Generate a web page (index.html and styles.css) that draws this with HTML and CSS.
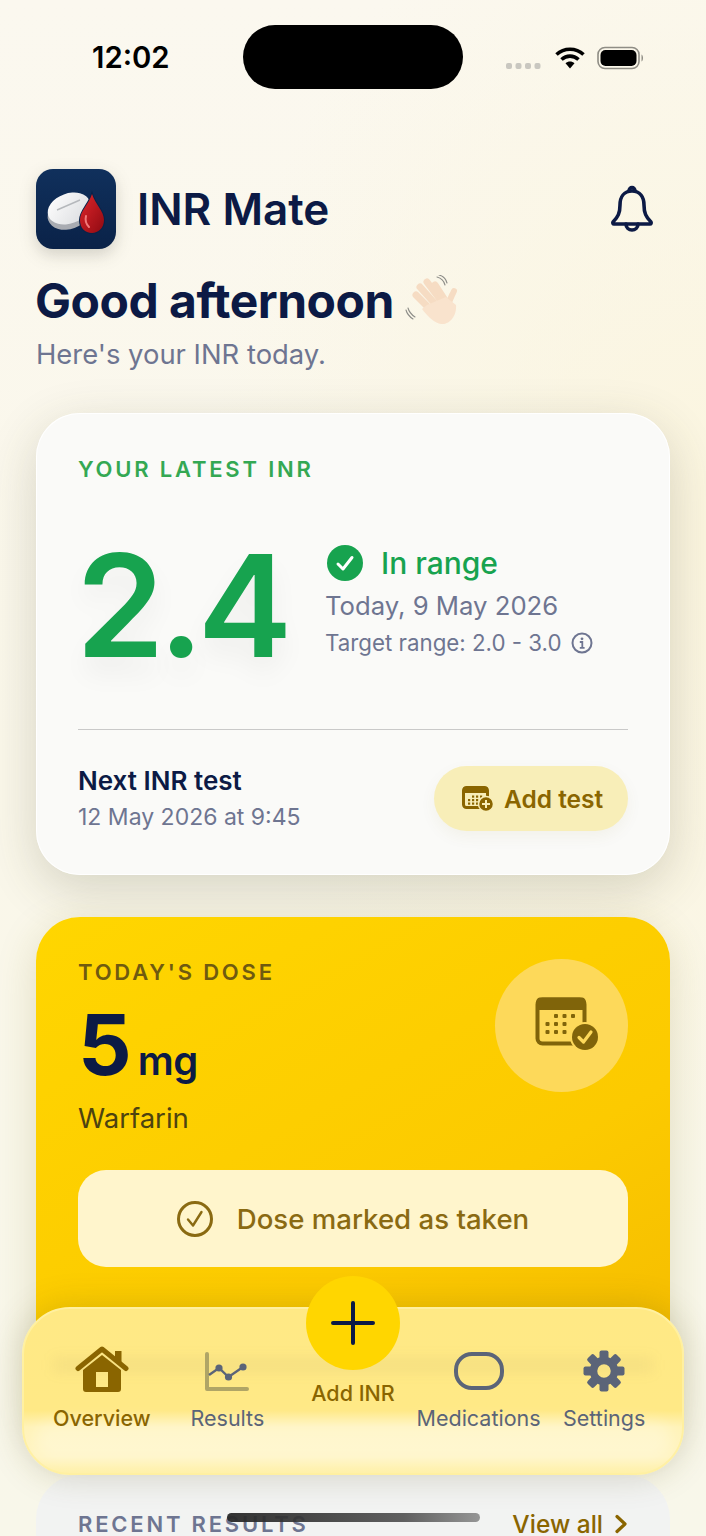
FILE: index.html
```html
<!DOCTYPE html>
<html lang="en">
<head>
<meta charset="utf-8">
<title>INR Mate</title>
<link rel="stylesheet" href="styles.css">
</head>
<body>
<div class="page">
  <div class="status">
    <div class="time">12:02</div>
    <div class="island"></div>
    <div class="status-icons">
      <svg class="signal" width="35" height="8" viewBox="0 0 35 8"><g fill="#c9c7c0"><rect x="0" y="1" width="6" height="6" rx="2"/><rect x="9.500" y="1" width="6" height="6" rx="2"/><rect x="19" y="1" width="6" height="6" rx="2"/><rect x="28.500" y="1" width="6" height="6" rx="2"/></g></svg>
      <svg class="wifi" width="30" height="24" viewBox="0 0 30 24"><g fill="none" stroke="#000" stroke-width="3.600"><path d="M1.500 8.500C9 1.500 21 1.500 28.500 8.500"/><path d="M6.500 13.500C11.500 9 18.500 9 23.500 13.500"/></g><path d="M10.500 17.200C13 15 17 15 19.500 17.200L15 22.500Z" fill="#000"/></svg>
      <svg class="battery" width="48" height="24" viewBox="0 0 48 24"><rect x="1" y="1.500" width="41" height="21" rx="7" fill="none" stroke="#8f8d85" stroke-width="1.600"/><rect x="3.500" y="4" width="36" height="16" rx="5" fill="#000"/><path d="M44.500 8.500C46.500 9.500 46.500 14.500 44.500 15.500Z" fill="#8f8d85"/></svg>
    </div>
  </div>

  <header class="brand">
    <div class="brand-left">
      <svg class="logo" width="80" height="80" viewBox="0 0 80 80">
        <defs>
          <linearGradient id="logoBg" x1="0" y1="0" x2="0" y2="1"><stop offset="0" stop-color="#10305c"/><stop offset="1" stop-color="#0a2248"/></linearGradient>
          <linearGradient id="pillTop" x1="0" y1="0" x2="1" y2="1"><stop offset="0" stop-color="#ffffff"/><stop offset="1" stop-color="#d9dbde"/></linearGradient>
          <linearGradient id="dropFill" x1="0" y1="0" x2="1" y2="1"><stop offset="0" stop-color="#e0262b"/><stop offset="1" stop-color="#8f0a12"/></linearGradient>
        </defs>
        <rect width="80" height="80" rx="17" fill="url(#logoBg)"/>
        <ellipse cx="33" cy="44" rx="22" ry="16" transform="rotate(-20 33 44)" fill="#a9acb2"/>
        <ellipse cx="33" cy="39.500" rx="22" ry="15" transform="rotate(-20 33 39.500)" fill="url(#pillTop)"/>
        <path d="M21 41L44 31" stroke="#b5b8bc" stroke-width="1.400"/>
        <path d="M56 25C59 35 68 42 68 51C68 59 62 64 56 64C49 64 44 59 44 51C44 42 53 35 56 25Z" fill="#0a2248" stroke="#0a2248" stroke-width="2"/>
        <path d="M56 25C59 35 68 42 68 51C68 59 62 64 56 64C49 64 44 59 44 51C44 42 53 35 56 25Z" fill="url(#dropFill)"/>
        <path d="M50 47C49 51 50 55 53 58" stroke="#f27a7a" stroke-width="2" fill="none" stroke-linecap="round"/>
      </svg>
      <div class="app-name">INR Mate</div>
    </div>
    <svg class="bell" width="44" height="48" viewBox="0 0 44 48"><g fill="none" stroke="#0c1a45" stroke-width="3.600" stroke-linejoin="round" stroke-linecap="round"><path d="M22 6C14 6 10 12 10 20C10 28 8 32 3 37C2.500 38 3 39 4 39H40C41 39 41.500 38 41 37C36 32 34 28 34 20C34 12 30 6 22 6Z"/><path d="M19 6C19 1.500 25 1.500 25 6"/><path d="M16 39C16 47 28 47 28 39"/></g></svg>
  </header>

  <div class="greeting">
    <h1 class="greeting-title">Good afternoon
      <svg class="wave" width="56" height="52" viewBox="4 4 56 52">
        <g fill="none" stroke="#f6dcc3" stroke-width="7" stroke-linecap="round">
          <path d="M17 24L33 40"/><path d="M21 16L38 35"/><path d="M28 11L43 31"/><path d="M36 14L47 31"/>
          <path d="M55 20C53 25 50 28 49 36" stroke-width="6"/>
        </g>
        <path d="M28 34L47 26L57 34C58 44 51 54 42 53C36 52 30 47 23 38Z" fill="#f9e3cd"/>
        <g fill="none" stroke="#8d8d88" stroke-width="1.100" stroke-linecap="round"><path d="M38 6C42 7 45 10 46 14"/><path d="M40 4C44 5 47 8 48 12"/><path d="M9 37C10 41 13 44 16 46"/><path d="M7 39C8 43 11 46 14 48"/></g>
      </svg>
    </h1>
    <p class="greeting-sub">Here's your INR today.</p>
  </div>

  <section class="card card-inr">
    <div class="label label-green">YOUR LATEST INR</div>
    <div class="hero">
      <div class="hero-value">2.4</div>
      <div class="hero-info">
        <div class="range-row">
          <svg width="36" height="36" viewBox="0 0 36 36"><circle cx="18" cy="18" r="18" fill="#17a34f"/><path d="M11 19L16 24L25 12.500" fill="none" stroke="#fff" stroke-width="3" stroke-linecap="round" stroke-linejoin="round"/></svg>
          <span class="range-text">In range</span>
        </div>
        <div class="hero-date">Today, 9 May 2026</div>
        <div class="hero-target">Target range: 2.0 - 3.0
          <svg class="info" width="22" height="22" viewBox="0 0 22 22"><circle cx="11" cy="11" r="9.500" fill="none" stroke="#6e7591" stroke-width="2"/><circle cx="11" cy="6.800" r="1.400" fill="#6e7591"/><path d="M8.800 10H11.300V15.500M8.800 15.800H13.600" fill="none" stroke="#6e7591" stroke-width="1.800"/></svg>
        </div>
      </div>
    </div>
    <div class="divider"></div>
    <div class="next-row">
      <div>
        <div class="next-title">Next INR test</div>
        <div class="next-date">12 May 2026 at 9:45</div>
      </div>
      <div class="add-test">
        <svg width="32" height="26" viewBox="0 0 32 26">
          <rect x="1.500" y="1.500" width="24" height="20" rx="3" fill="none" stroke="#8a6500" stroke-width="3"/>
          <rect x="1" y="1" width="25" height="6" rx="2" fill="#8a6500"/>
          <g fill="#8a6500"><rect x="10" y="9.500" width="2.200" height="2.200"/><rect x="14" y="9.500" width="2.200" height="2.200"/><rect x="18" y="9.500" width="2.200" height="2.200"/><rect x="6" y="13" width="2.200" height="2.200"/><rect x="10" y="13" width="2.200" height="2.200"/><rect x="14" y="13" width="2.200" height="2.200"/><rect x="6" y="16.500" width="2.200" height="2.200"/><rect x="10" y="16.500" width="2.200" height="2.200"/><rect x="14" y="16.500" width="2.200" height="2.200"/></g>
          <circle cx="24" cy="18" r="7.500" fill="#8a6500" stroke="#f8eeb8" stroke-width="1.500"/>
          <path d="M24 14V22M20 18H28" stroke="#f8eeb8" stroke-width="2"/>
        </svg>
        <span>Add test</span>
      </div>
    </div>
  </section>

  <section class="card card-dose">
    <div class="dose-top">
      <div>
        <div class="label label-dose">TODAY'S DOSE</div>
        <div class="dose-amount"><span class="dose-num">5</span><span class="dose-unit">mg</span></div>
        <div class="dose-name">Warfarin</div>
      </div>
      <div class="dose-circle">
        <svg class="dose-cal" width="66" height="56" viewBox="0 0 66 56">
          <rect x="3.500" y="3.500" width="47" height="44" rx="5" fill="none" stroke="#80640a" stroke-width="4"/>
          <path d="M2 7C2 3.500 3.500 1.500 7 1.500H47C50.500 1.500 52 3.500 52 7V14H2Z" fill="#80640a"/>
          <g fill="#80640a"><rect x="20" y="18" width="4" height="4" rx="1"/><rect x="28.500" y="18" width="4" height="4" rx="1"/><rect x="37" y="18" width="4" height="4" rx="1"/><rect x="11.500" y="26" width="4" height="4" rx="1"/><rect x="20" y="26" width="4" height="4" rx="1"/><rect x="28.500" y="26" width="4" height="4" rx="1"/><rect x="11.500" y="34" width="4" height="4" rx="1"/><rect x="20" y="34" width="4" height="4" rx="1"/><rect x="28.500" y="34" width="4" height="4" rx="1"/></g>
          <circle cx="51" cy="41" r="15" fill="#fdd95a"/>
          <circle cx="51" cy="41" r="13" fill="#80640a"/>
          <path d="M45 41.500L49.500 46L57 36" fill="none" stroke="#fdd95a" stroke-width="3.200" stroke-linecap="round" stroke-linejoin="round"/>
        </svg>
      </div>
    </div>
    <div class="dose-btn">
      <svg width="36" height="36" viewBox="0 0 36 36"><circle cx="18" cy="18" r="16.500" fill="none" stroke="#8a6a12" stroke-width="3"/><path d="M11 18.500L16 24.500L24.500 11" fill="none" stroke="#8a6a12" stroke-width="2.400" stroke-linecap="round" stroke-linejoin="round"/></svg>
      <span>Dose marked as taken</span>
    </div>
  </section>

  <section class="card card-recent">
    <div class="recent-row">
      <div class="label label-recent">RECENT RESULTS</div>
      <div class="view-all">View all
        <svg width="14" height="20" viewBox="0 0 14 20"><path d="M3 2.500L11 10L3 17.500" fill="none" stroke="#8a6500" stroke-width="3.200" stroke-linecap="round" stroke-linejoin="round"/></svg>
      </div>
    </div>
  </section>
</div>

<nav class="tabbar">
  <div class="tabbar-smear"></div>
  <div class="tabbar-glow"></div>
  <div class="tab tab-active">
    <svg class="tab-icon" width="54" height="50" viewBox="0 0 54 50"><path d="M8 24L27 9L46 24V43C46 45 45 46 43 46H11C9 46 8 45 8 43Z M21 26V41H33V26Z" fill="#8a6500" fill-rule="evenodd"/><path d="M40 5H46.500V17L40 12Z" fill="#8a6500"/><path d="M3 22.500L27 3L51 22.500" fill="none" stroke="#8a6500" stroke-width="5" stroke-linecap="round" stroke-linejoin="round"/></svg>
    <span>Overview</span>
  </div>
  <div class="tab">
    <svg class="tab-icon" width="54" height="50" viewBox="0 0 54 50"><path d="M7 8V43H47" fill="none" stroke="#b0a566" stroke-width="4" stroke-linecap="round" stroke-linejoin="round"/><path d="M9 29L19 22L28.500 31L43 21" fill="none" stroke="#5b6478" stroke-width="2.400"/><g fill="#5b6478"><circle cx="19" cy="22" r="3.600"/><circle cx="28.500" cy="31" r="3.600"/><circle cx="43" cy="21" r="3.600"/></g></svg>
    <span>Results</span>
  </div>
  <div class="tab tab-add">
    <div class="fab"><svg width="44" height="44" viewBox="0 0 44 44"><path d="M22 2V42M2 22H42" stroke="#0c1a45" stroke-width="4" stroke-linecap="round"/></svg></div>
    <span>Add INR</span>
  </div>
  <div class="tab">
    <svg class="tab-icon" width="54" height="50" viewBox="0 0 54 50"><rect x="4" y="8" width="46" height="34" rx="16" fill="none" stroke="#5b6478" stroke-width="4"/></svg>
    <span>Medications</span>
  </div>
  <div class="tab">
    <svg class="tab-icon" width="54" height="50" viewBox="0 0 54 50">
      <g transform="translate(27 25)" fill="#5b6478">
        <circle r="10.500" fill="none" stroke="#5b6478" stroke-width="7.500"/>
        <rect x="-4.500" y="-20.500" width="9" height="9" rx="2"/>
        <rect x="-4.500" y="-20.500" width="9" height="9" rx="2" transform="rotate(45)"/>
        <rect x="-4.500" y="-20.500" width="9" height="9" rx="2" transform="rotate(90)"/>
        <rect x="-4.500" y="-20.500" width="9" height="9" rx="2" transform="rotate(135)"/>
        <rect x="-4.500" y="-20.500" width="9" height="9" rx="2" transform="rotate(180)"/>
        <rect x="-4.500" y="-20.500" width="9" height="9" rx="2" transform="rotate(225)"/>
        <rect x="-4.500" y="-20.500" width="9" height="9" rx="2" transform="rotate(270)"/>
        <rect x="-4.500" y="-20.500" width="9" height="9" rx="2" transform="rotate(315)"/>
      </g>
    </svg>
    <span>Settings</span>
  </div>
</nav>
<div class="home-indicator"></div>
</body>
</html>
```

FILE: styles.css
```css
* { box-sizing: border-box; }
html, body { margin: 0; height: 100%; overflow: hidden; }
body {
  position: relative;
  font-family: Inter, "Liberation Sans", sans-serif;
  color: #0c1a45;
  background:
    radial-gradient(500px 700px at 100% 35%, #fbf5df 0%, rgba(251,245,223,0) 100%),
    linear-gradient(180deg, #fbf8ef 0%, #faf7ea 50%, #f8f7ea 100%);
}
.page { padding: 25px 36px 0; }

.status { display: grid; grid-template-columns: 1fr 220px 1fr; margin: 0 -36px; height: 64px; }
.time { font-size: 29.3px; font-weight: 600; line-height: 66px; padding-left: 92px; color: #000; }
.island { background: #000; border-radius: 32px; height: 64px; }
.status-icons { display: flex; align-items: center; padding-left: 43px; }
.signal { margin-top: 16px; margin-right: 14px; }
.wifi { margin-top: 0; margin-right: 12px; }
.battery { margin-top: -1px; }

.brand { display: flex; justify-content: space-between; align-items: center; margin-top: 80px; height: 80px; }
.brand-left { display: flex; align-items: center; gap: 21px; }
.logo { display: block; filter: drop-shadow(0 6px 8px rgba(40,40,30,.18)); }
.app-name { font-size: 44px; font-weight: 600; }
.bell { margin-right: 16px; }

.greeting { margin-top: 24px; }
.greeting-title { margin: 0; display: flex; align-items: center; gap: 8px; margin-left: -1px; font-size: 48px; line-height: 56px; font-weight: 700; letter-spacing: -0.5px; }
.wave { margin-left: 1px; }
.greeting-sub { margin: 8px 0 0; font-size: 27.4px; line-height: 34px; color: #6e7591; }

.card { border-radius: 44px; padding: 43px 42px 44px; margin-top: 42px; }
.label { font-size: 22px; line-height: 26px; font-weight: 600; letter-spacing: 2.8px; }
.card-inr { background: #fafaf8; box-shadow: inset 0 0 0 1px rgba(255,255,255,.9), 0 14px 50px rgba(70,70,40,.2); }
.label-green { color: #34a853; }

.hero { display: flex; align-items: center; height: 170px; margin-top: 38px; }
.hero-value { width: 249px; margin-left: -2px; font-size: 142px; line-height: 170px; font-weight: 600; color: #17a34f; letter-spacing: -6px; text-shadow: 0 16px 28px rgba(0,0,0,.05); }
.hero-info { display: flex; flex-direction: column; margin-bottom: 7px; }
.range-row { display: flex; align-items: center; gap: 18px; margin-left: 2px; }
.range-text { font-size: 30px; line-height: 36px; font-weight: 500; color: #17a34f; }
.hero-date { font-size: 25.7px; line-height: 34px; color: #6e7591; margin-top: 8px; }
.hero-target { display: flex; align-items: center; gap: 9px; font-size: 22.3px; line-height: 30px; color: #6e7591; margin-top: 5px; }

.divider { height: 1px; background: #c9c9c9; margin-top: 39px; }
.next-row { display: flex; justify-content: space-between; align-items: center; margin-top: 36px; height: 65px; }
.next-title { font-size: 26px; line-height: 32px; font-weight: 600; }
.next-date { font-size: 23px; line-height: 30px; color: #6e7591; margin-top: 5px; }
.add-test { display: flex; align-items: center; gap: 10px; height: 65px; width: 194px; padding-left: 28px; border-radius: 33px; background: #f8eeb8; color: #8a6500; font-size: 24.5px; font-weight: 600; box-shadow: 0 6px 16px rgba(120,100,20,.06); }

.card-dose { padding-top: 42px; padding-bottom: 166px; background: linear-gradient(150deg, #ffd600 0%, #fcca00 60%, #f3b900 100%); box-shadow: 0 10px 40px rgba(130,120,30,.2); }
.dose-top { display: flex; justify-content: space-between; align-items: flex-start; }
.label-dose { color: #6f5a10; }
.dose-amount { display: flex; align-items: baseline; gap: 8px; margin-top: 18px; height: 84px; }
.dose-num { font-size: 84px; line-height: 84px; font-weight: 700; letter-spacing: -2px; }
.dose-unit { font-size: 40px; font-weight: 600; letter-spacing: -0.5px; }
.dose-name { font-size: 27.5px; line-height: 34px; color: #4d4310; margin-top: 14px; }
.dose-circle { width: 133px; height: 133px; border-radius: 50%; background: #fdd95a; display: flex; align-items: center; justify-content: center; }
.dose-cal { margin-left: 11px; margin-top: -3px; }
.dose-btn { display: flex; align-items: center; justify-content: center; gap: 24px; height: 97px; margin-top: 35px; border-radius: 28px; background: #fff5cc; color: #8a6a12; font-size: 27.6px; font-weight: 500; }

.card-recent { padding-top: 36px; background: #f2f3f2; }
.recent-row { display: flex; justify-content: space-between; align-items: center; }
.label-recent { color: #6e7591; }
.view-all { display: flex; align-items: center; gap: 11px; font-size: 24.5px; font-weight: 500; line-height: 26px; color: #8a6500; }

.tabbar {
  position: absolute; left: 22px; right: 22px; bottom: 61px; height: 168px;
  display: grid; grid-template-columns: repeat(5, 1fr); align-items: start;
  padding: 37px 15px 0;
  border-radius: 48px;
  background: linear-gradient(180deg, #ffe985 0%, #ffe986 62%, #fff3b8 72%, #fff4c0 90%, #fff1a8 100%);
  border: 2px solid #fff0a0;
  box-shadow: 0 0 34px rgba(90,80,20,.22);
}
.tabbar-smear { position: absolute; left: 30px; right: 30px; top: 50px; height: 12px; background: rgba(140,125,90,.1); filter: blur(7px); }
.tabbar-glow { position: absolute; left: 10px; right: 10px; top: 112px; bottom: 12px; border-radius: 30px; background: rgba(255,255,255,.28); filter: blur(8px); }
.tab { position: relative; display: flex; flex-direction: column; align-items: center; color: #5b6478; font-size: 21.5px; line-height: 28px; white-space: nowrap; }
.tab-icon { display: block; margin-bottom: 8px; }
.tab-active { color: #8a6500; font-weight: 500; }
.tab-add { color: #8a6500; font-weight: 500; }
.fab { width: 94px; height: 94px; border-radius: 50%; background: #ffd600; margin-top: -70px; margin-bottom: 9px; display: flex; align-items: center; justify-content: center; }

.home-indicator { position: absolute; left: 227px; top: 1513px; width: 253px; height: 9px; border-radius: 5px; background: linear-gradient(90deg, rgba(40,40,40,.95) 0%, rgba(70,70,70,.85) 70%, rgba(110,110,110,.7) 100%); }
```
